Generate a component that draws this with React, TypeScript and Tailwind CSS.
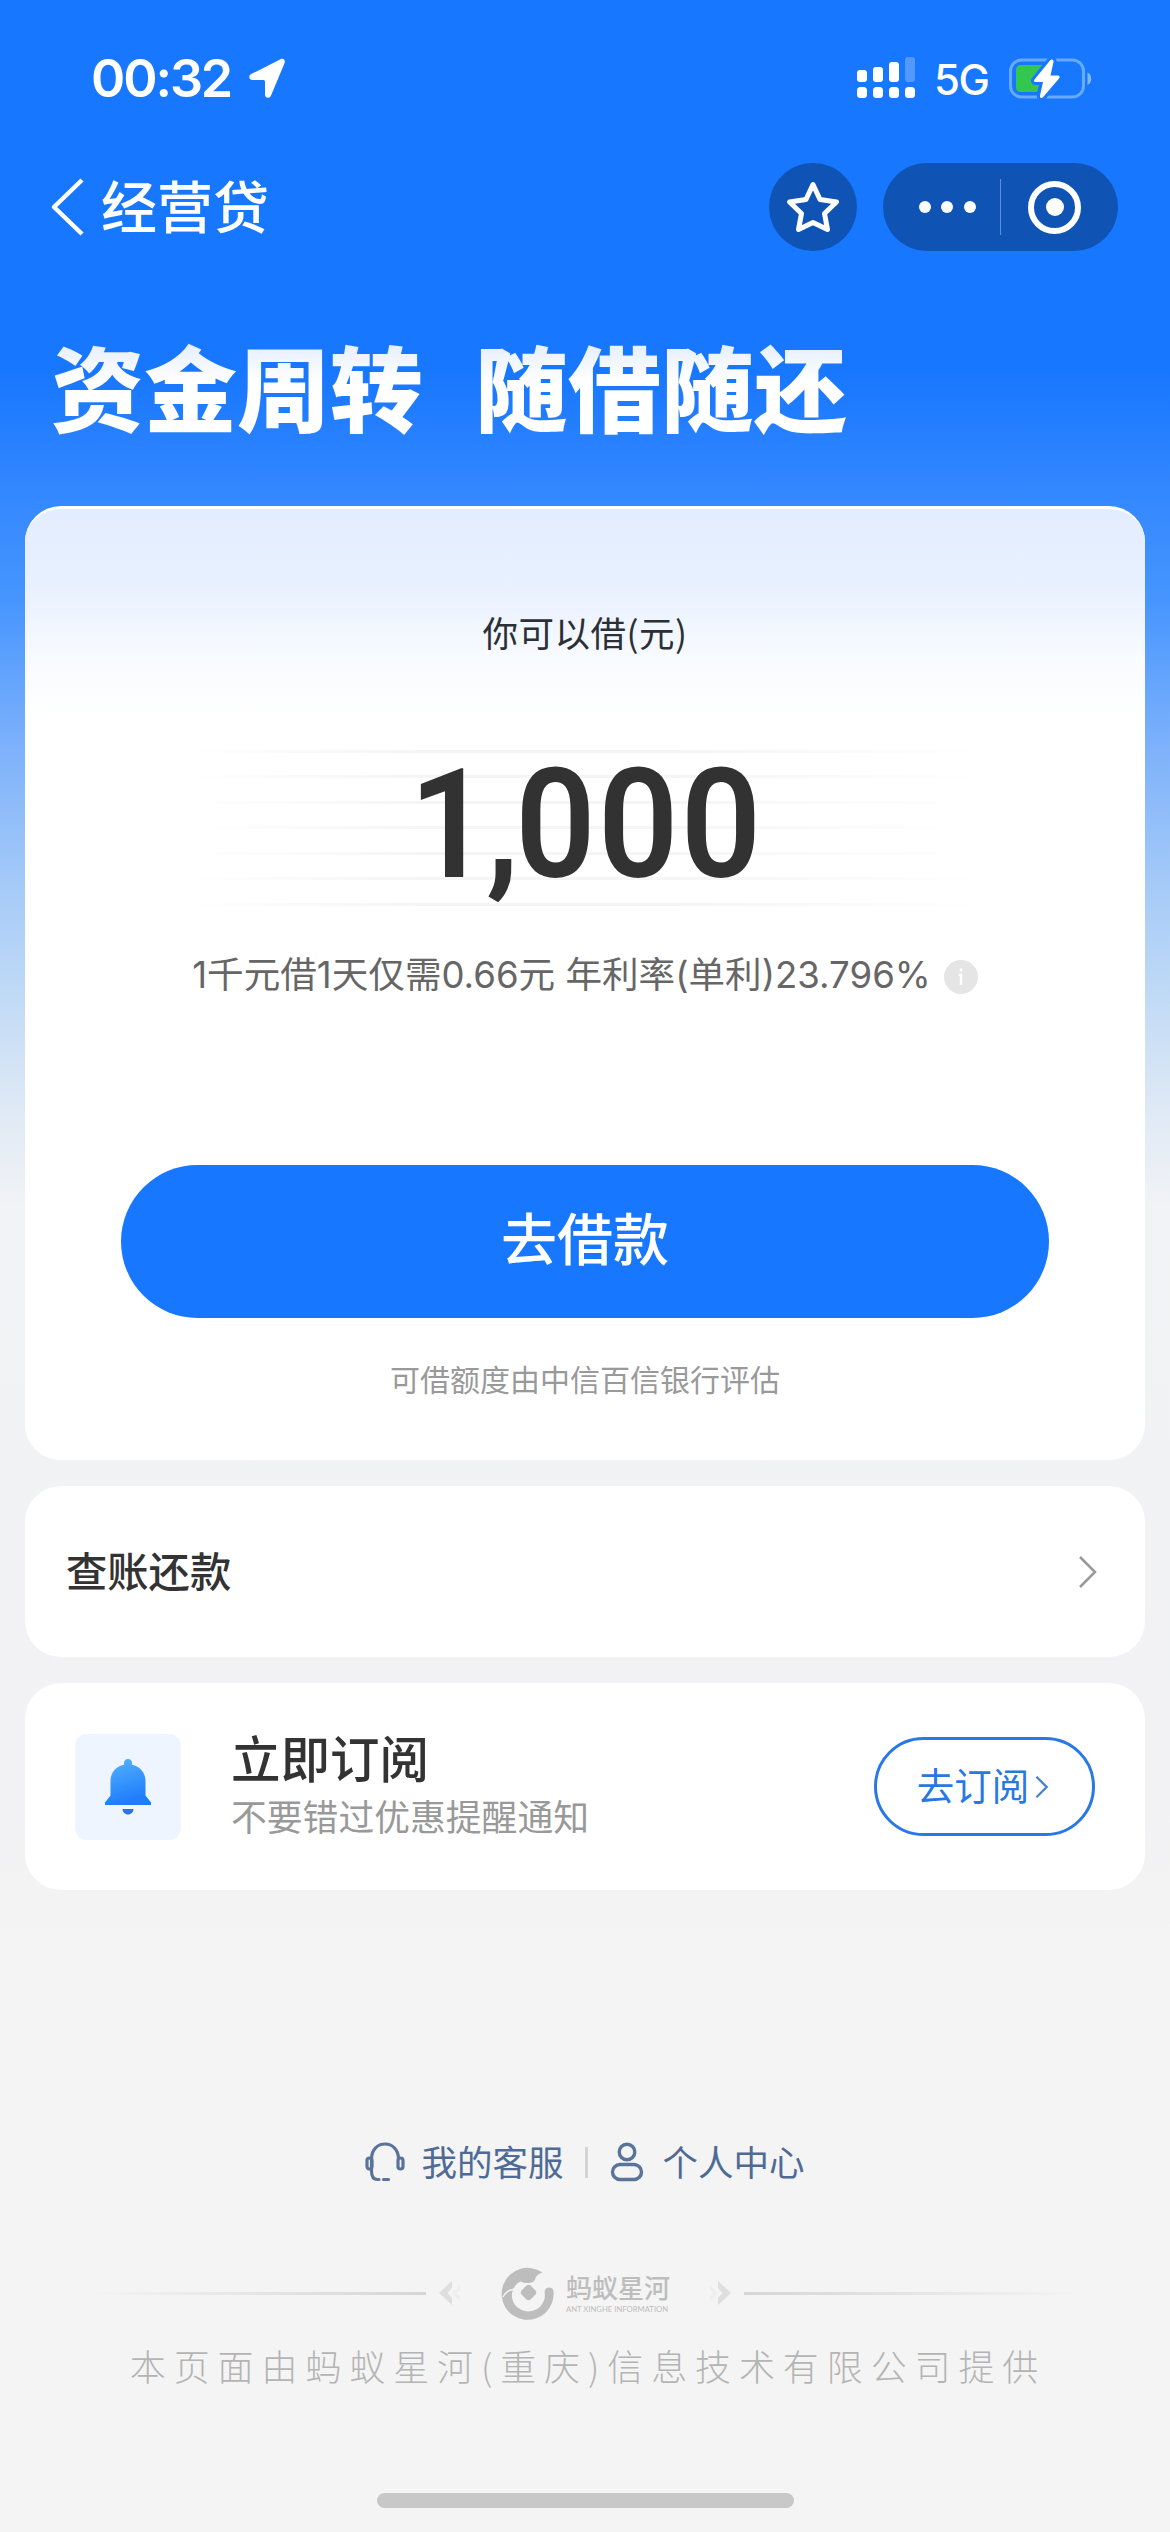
import React from 'react';

const StatusBar: React.FC = () => (
  <div className="flex h-[156px] items-center justify-between pl-[91px] pr-[78px] text-white">
    <div className="flex items-center">
      <span className="w-[157px] whitespace-nowrap pt-px font-['Inter','Liberation_Sans',sans-serif] text-[52px] font-semibold leading-none tracking-[-2.100px]">00:32</span>
      <svg className="h-[42px] w-[39px]" viewBox="0 0 38 42" fill="currentColor">
        <path d="M32 2.2c2.800-1.500 5.300.8 4 4L22.500 38.500c-1.400 3.500-6 2.800-6-1V24.500q0-1.500-1.500-1.500H4C.5 23-.5 18.500 2.800 17z" />
      </svg>
    </div>
    <div className="flex items-center">
      <svg className="h-[42px] w-[58px]" viewBox="0 0 58 42" fill="currentColor">
        <rect x="0" y="13" width="10" height="12" rx="3" />
        <rect x="16" y="10" width="10" height="15" rx="3" />
        <rect x="32" y="5" width="10" height="20" rx="3" />
        <rect x="48" y="0" width="10" height="25" rx="3" opacity="0.25" />
        <rect x="0" y="30" width="10" height="11" rx="3.500" />
        <rect x="16" y="30" width="10" height="11" rx="3.500" />
        <rect x="32" y="30" width="10" height="11" rx="3.500" />
        <rect x="48" y="30" width="10" height="11" rx="3.500" />
      </svg>
      <span className="ml-[19px] w-[75px] whitespace-nowrap pt-[3px] font-['Inter','Liberation_Sans',sans-serif] text-[42px] font-medium leading-none tracking-[-1.500px]">5G</span>
      <svg className="h-[44px] w-[83px]" viewBox="0 0 83 44">
        <rect x="1.500" y="4" width="73" height="37" rx="11" fill="none" stroke="#68aaff" strokeWidth="3" />
        <path d="M78.500 16.500c5 2 5 10.500 0 12.500z" fill="#7db8ff" />
        <path d="M12 9h22L24 26h7l-3 10H12q-5 0-5-5V14q0-5 5-5z" fill="#34c74f" />
        <path
          d="M41 4.500 25.500 23.500c-1 1.500-.5 2.500 1 2.500h7.500l-3 13.500c-.5 2.500 1.500 3.500 3.200 1.500L50 22.500c1.300-1.500.5-3-1.200-3H41.500l3-13.500c.5-2.500-1.700-3.500-3.500-1.500z"
          fill="#fff"
          stroke="#1777ff"
          strokeWidth="6"
          paintOrder="stroke"
        />
      </svg>
    </div>
  </div>
);

const NavBar: React.FC = () => (
  <div className="flex h-[102px] items-center justify-between pl-[50px] pr-[52px] text-white">
    <div className="flex items-center">
      <svg className="h-[60px] w-[34px]" viewBox="0 0 34 58" fill="none" stroke="currentColor" strokeWidth="4.500">
        <path d="M32 2 4 29 32 56" strokeLinejoin="round" />
      </svg>
      <h1 className="ml-[17px] pt-[4px] text-[56px] font-medium leading-none">经营贷</h1>
    </div>
    <div className="flex items-center gap-[26px]">
      <button className="flex size-[88px] items-center justify-center rounded-full bg-[#0f54b5]">
        <svg className="h-[54px] w-[56px]" viewBox="0 0 56 54" fill="none" stroke="currentColor" strokeWidth="5" strokeLinejoin="round">
          <path d="M28 4.500 35 19.500 51.500 22 39.500 33.500 42.500 49.500 28 42.500 13.500 49.500 16.500 33.500 4.500 22 21 19.500z" />
        </svg>
      </button>
      <div className="flex h-[88px] w-[235px] items-center rounded-full bg-[#0f54b5]">
        <div className="flex flex-1 items-center justify-center gap-[10.500px] pl-[21px]">
          <span className="size-[12px] rounded-full bg-white" />
          <span className="size-[12px] rounded-full bg-white" />
          <span className="size-[12px] rounded-full bg-white" />
        </div>
        <span className="ml-[10px] h-[56px] w-px bg-[#5b8fdc]" />
        <div className="flex w-[117px] items-center pl-[27px]">
          <span className="flex size-[53px] items-center justify-center rounded-full border-[6px] border-white">
            <span className="size-[18px] rounded-full bg-white" />
          </span>
        </div>
      </div>
    </div>
  </div>
);

const QuotaCard: React.FC = () => (
  <section className="flex h-[954px] flex-col items-center rounded-[36px] border-t-[3px] border-white bg-white bg-[linear-gradient(180deg,#e2edff_0px,#e9f1ff_80px,#f7faff_145px,#ffffff_205px)]">
    <p className="mt-[103px] font-['Noto_Sans_CJK_SC',sans-serif] text-[35.500px] leading-[40px] tracking-[0.500px] text-[#2b3036]">你可以借(元)</p>
    <div className="relative mt-[64px] flex h-[216px] w-[800px] items-center justify-center">
      <div className="absolute inset-x-0 top-[34px] h-[156px] bg-[repeating-linear-gradient(180deg,#f5f5f6_0px,#f5f5f6_3px,transparent_3px,transparent_25.500px)] [mask-image:linear-gradient(90deg,transparent,black_30%,black_60%,transparent)]" />
      <p className="relative scale-x-92 pl-[4px] font-['Roboto','Liberation_Sans',sans-serif] text-[153px] font-semibold leading-none tracking-[-4px] text-[#323232]">
        1,<span className="tracking-[2.500px]">000</span>
      </p>
    </div>
    <div className="mt-[23px] flex h-[40px] items-center gap-[13px]">
      <p className="whitespace-nowrap font-['Inter','Noto_Sans_CJK_SC',sans-serif] text-[36.600px] leading-none text-[#666666]">1千元借1天仅需0.66元 年利率(单利)23.796%</p>
      <span className="mt-[3px] flex size-[34px] items-center justify-center rounded-full bg-[#e5e5e5]">
        <svg className="h-[20px] w-[8px]" viewBox="0 0 8 20" fill="none" stroke="#fff" strokeWidth="2.500">
          <path d="M4 1.500v3M1.500 8H4v10" />
        </svg>
      </span>
    </div>
    <button className="mt-[170px] h-[153px] w-[928px] shrink-0 rounded-full bg-[#1777ff] pb-[2px] text-[56px] font-medium leading-none text-white">去借款</button>
    <p className="mt-[46px] text-[30px] leading-[34px] text-[#999999]">可借额度由中信百信银行评估</p>
  </section>
);

const SubscribeCard: React.FC = () => (
  <section className="flex h-[207px] items-center rounded-[36px] bg-white pl-[50px] pr-[50px]">
    <div className="flex size-[106px] items-center justify-center rounded-[12px] bg-[#eef5ff]">
      <svg className="h-[60px] w-[50px]" viewBox="0 0 50 60">
        <defs>
          <linearGradient id="bell" x1="0" y1="0" x2="0.3" y2="1">
            <stop offset="0" stopColor="#55b4ff" />
            <stop offset="1" stopColor="#1f7cfb" />
          </linearGradient>
        </defs>
        <path d="M25 2c2.500 0 4 1.700 4 4.500v1.200C37.500 9.500 42.500 16 42.500 24v14.500L48 45.500V48H2v-2.500L7.500 38.500V24C7.500 16 12.500 9.500 21 7.700V6.500C21 3.700 22.500 2 25 2z" fill="url(#bell)" />
        <path d="M19.500 52h11c0 3-2.500 5.500-5.500 5.500S19.500 55 19.500 52z" fill="#2f74d8" />
      </svg>
    </div>
    <div className="ml-[50px] flex flex-1 flex-col pt-[7px]">
      <h2 className="text-[49.500px] font-medium leading-[58px] text-[#333333]">立即订阅</h2>
      <p className="text-[35.800px] leading-[58px] text-[#999999]">不要错过优惠提醒通知</p>
    </div>
    <button className="flex h-[99px] w-[221px] items-center justify-center gap-[6px] rounded-full border-[3px] border-[#2878e8] pr-[3px] text-[37.500px] leading-none text-[#2878e0]">
      <span className="pt-[2px]">去订阅</span>
      <svg className="h-[24px] w-[14px]" viewBox="0 0 15 24" fill="none" stroke="#4a82cc" strokeWidth="2.500">
        <path d="M1.500 1 12.500 12 1.500 23" />
      </svg>
    </button>
  </section>
);

const Footer: React.FC = () => (
  <footer className="flex flex-col items-center">
    <div className="mt-[248px] flex h-[48px] items-center text-[35.500px] leading-none text-[#4f6b95]">
      <svg className="h-[40px] w-[40px]" viewBox="0 0 40 40" fill="none" stroke="#5a7499" strokeWidth="3.200" strokeLinecap="round">
        <path d="M6.500 16C7 7.500 12.500 2 20 2s13 5.500 13.500 14M6.500 16v13q0 8.500 6 8.500h1.500M18.500 37.500h5" />
        <rect x="2" y="16" width="5" height="11" rx="2.500" />
        <rect x="33" y="16" width="5" height="11" rx="2.500" />
      </svg>
      <span className="ml-[16px] pt-[5px]">我的客服</span>
      <span className="ml-[21px] h-[31px] w-[3px] bg-[#d4d4d4]" />
      <svg className="ml-[22px] h-[40px] w-[34px]" viewBox="0 0 34 40" fill="none" stroke="#5a7499" strokeWidth="3.400">
        <circle cx="17" cy="10" r="7.800" />
        <rect x="2.500" y="22.500" width="29" height="15" rx="7.500" />
      </svg>
      <span className="ml-[19px] pt-[5px]">个人中心</span>
    </div>

    <div className="mt-[79px] flex h-[56px] items-center text-[#bdbdbd]">
      <span className="h-[3px] w-[340px] bg-linear-to-r from-transparent to-[#d6d6d6]" />
      <svg className="ml-[11px] h-[26px] w-[26px]" viewBox="0 0 26 26">
        <path d="M15 1 2 13 15 25V18L10.500 13 15 8z" fill="#dedede" />
        <path d="M23 5 15 13l8 8v-4l-3-4 3-4z" fill="#eeeeee" />
      </svg>
      <svg className="ml-[38px] h-[54px] w-[54px]" viewBox="0 0 54 54">
        {/* open ring with a square core */}
        <path
          d="M41.500 6.500A26 26 0 1 0 52.500 25q-.5-3.500-4.500-3.500-4 0-4.500 4.500a16.500 16 0 1 1-29.500-6q2-3.500 5.500-4.500 4 2 8.500 1.500 6-.5 6.500-5 1.500-4 7-5.500z"
          fill="#bdbdbd"
        />
        <path d="M2 31C5 25 9 24 13.500 23" fill="none" stroke="#f4f4f4" strokeWidth="1.500" />
        <path d="M25.500 19.500q2-1.500 4 0l5 5q1.500 2 0 4l-5 5q-2 1.500-4 0l-5-5q-1.500-2 0-4z" fill="#bdbdbd" />
      </svg>
      <div className="ml-[11px] flex w-[105px] flex-col pt-px">
        <span className="text-[26px] font-medium leading-[30px]">蚂蚁星河</span>
        <span className="whitespace-nowrap font-['Lato','Liberation_Sans',sans-serif] text-[7.700px] leading-[10px]">ANT XINGHE INFORMATION</span>
      </div>
      <svg className="ml-[36px] h-[26px] w-[26px]" viewBox="0 0 26 26">
        <path d="M11 1 24 13 11 25V18L15.500 13 11 8z" fill="#dedede" />
        <path d="M3 5l8 8-8 8v-4l3-4-3-4z" fill="#eeeeee" />
      </svg>
      <span className="ml-[11px] h-[3px] w-[340px] bg-linear-to-l from-transparent to-[#d6d6d6]" />
    </div>

    <p className="mt-[22px] whitespace-nowrap pl-[6px] font-['Noto_Sans_CJK_SC',sans-serif] text-[36px] font-light leading-[44px] tracking-[7.900px] text-[#b4b4b4]">本页面由蚂蚁星河(重庆)信息技术有限公司提供</p>
    <div className="mt-[106px] h-[15px] w-[417px] rounded-full bg-[#c8c8c8]" />
  </footer>
);

export default function App() {
  return (
    <div className="h-[2532px] w-[1170px] overflow-hidden bg-[#f4f4f4] bg-[linear-gradient(180deg,#1777ff_0px,#1777ff_370px,#3387ff_490px,#4695ff_600px,#7bb0fb_740px,#a6cbf8_890px,#c4dcf5_1010px,#dfe9f5_1110px,#f2f3f6_1210px,#f2f2f4_1800px,#f4f4f4_2000px)] font-['Liberation_Sans','Noto_Sans_CJK_SC',sans-serif]">
      <StatusBar />
      <NavBar />
      <div className="flex h-[248px] items-center gap-[52px] whitespace-nowrap bg-linear-to-b from-[#e6efff] from-35% to-white to-50% bg-clip-text pl-[51px] pt-[22px] text-[93px] font-black leading-none text-transparent">
        <span>资金周转</span>
        <span>随借随还</span>
      </div>
      <main className="flex flex-col gap-[26px] px-[25px]">
        <QuotaCard />
        <section className="flex h-[171px] items-center justify-between rounded-[36px] bg-white pl-[41px] pr-[48px]">
          <h2 className="pt-[4px] text-[41.300px] font-medium leading-none text-[#333333]">查账还款</h2>
          <svg className="h-[32px] w-[18px]" viewBox="0 0 18 32" fill="none" stroke="#999999" strokeWidth="2.500">
            <path d="M1 1 16 16 1 31" />
          </svg>
        </section>
        <SubscribeCard />
      </main>
      <Footer />
    </div>
  );
}
